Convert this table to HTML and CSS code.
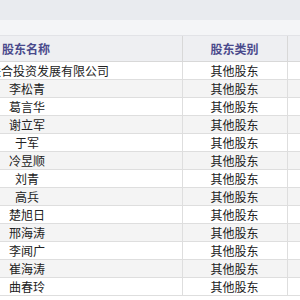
FILE: index.html
```html
<!DOCTYPE html>
<html lang="zh-CN">
<head>
<meta charset="utf-8">
<title>股东</title>
<link rel="stylesheet" href="styles.css">
</head>
<body>
<div class="topbar"></div>
<div class="subbar"></div>
<table class="holders">
  <colgroup>
    <col class="c-name">
    <col class="c-type">
    <col class="c-extra">
  </colgroup>
  <thead>
    <tr>
      <th class="th-name">股东名称</th>
      <th>股东类别</th>
      <th></th>
    </tr>
  </thead>
  <tbody>
    <tr><td><div class="nm nm-long">联合投资发展有限公司</div></td><td>其他股东</td><td></td></tr>
    <tr><td><div class="nm">李松青</div></td><td>其他股东</td><td></td></tr>
    <tr><td><div class="nm">葛言华</div></td><td>其他股东</td><td></td></tr>
    <tr><td><div class="nm">谢立军</div></td><td>其他股东</td><td></td></tr>
    <tr><td><div class="nm">于军</div></td><td>其他股东</td><td></td></tr>
    <tr><td><div class="nm">冷昱顺</div></td><td>其他股东</td><td></td></tr>
    <tr><td><div class="nm">刘青</div></td><td>其他股东</td><td></td></tr>
    <tr><td><div class="nm">高兵</div></td><td>其他股东</td><td></td></tr>
    <tr><td><div class="nm">楚旭日</div></td><td>其他股东</td><td></td></tr>
    <tr><td><div class="nm">邢海涛</div></td><td>其他股东</td><td></td></tr>
    <tr><td><div class="nm">李闻广</div></td><td>其他股东</td><td></td></tr>
    <tr><td><div class="nm">崔海涛</div></td><td>其他股东</td><td></td></tr>
    <tr><td><div class="nm">曲春玲</div></td><td>其他股东</td><td></td></tr>
  </tbody>
</table>
</body>
</html>
```

FILE: styles.css
```css
html, body {
  margin: 0;
  padding: 0;
  background: #ffffff;
  overflow: hidden;
}
body {
  font-family: "Noto Sans CJK SC", "Noto Sans", sans-serif;
  font-size: 12px;
  color: #222222;
}
.topbar {
  height: 20px;
  background: #e9ebef;
}
.subbar {
  height: 15px;
  background: #f4f5f7;
}
.holders {
  border-collapse: collapse;
  table-layout: fixed;
  width: 300px;
}
.c-name { width: 182px; }
.c-type { width: 105px; }
.c-extra { width: 13px; }
.holders th {
  height: 25px;
  padding: 0;
  background: #eeeff2;
  color: #4a4a8c;
  font-weight: bold;
  font-size: 12px;
  text-align: center;
  border-top: 1px solid #e2e3e7;
  border-bottom: 1px solid #d8d8d8;
  border-left: 1px solid #d8d8d8;
}
.holders th.th-name {
  text-align: left;
  padding-left: 2px;
  border-left: none;
}
.holders td {
  height: 17px;
  padding: 0;
  line-height: 17px;
  text-align: center;
  border-bottom: 1px solid #dedede;
  border-left: 1px solid #dedede;
  white-space: nowrap;
}
.holders td:first-child {
  border-left: none;
  text-align: left;
  overflow: hidden;
}
.holders tbody tr:nth-child(even) td {
  background: #f4f4f4;
}
.nm {
  width: 54px;
  text-align: center;
  white-space: nowrap;
}
.nm-long {
  margin-left: -11px;
}
```
